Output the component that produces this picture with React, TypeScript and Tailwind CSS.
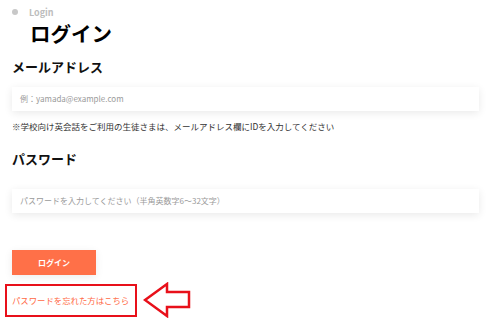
export default function App() {
  return (
    <main
      className="w-[500px] h-[318px] overflow-hidden bg-white"
      style={{ fontFamily: '"Noto Sans CJK JP", "Noto Sans", sans-serif' }}
    >
      <div className="flex items-center pt-[5px] h-[19px]">
        <span className="ml-[12px] h-[6px] w-[6px] rounded-full bg-[#c8c8c8]" />
        <span className="ml-[11px] text-[9px] font-bold leading-none text-[#bdbdbd]">Login</span>
      </div>

      <h1 className="ml-[30px] mt-[1px] text-[20.5px] font-bold leading-[26px] text-black">ログイン</h1>

      <div className="px-[12px]">
        <h2 className="mt-[12px] text-[13px] font-bold leading-[18px] text-[#111]">メールアドレス</h2>

        <div className="mt-[11px] mr-[9px] flex h-[24px] items-center bg-white px-[8px] shadow-[0_2px_8px_rgba(0,0,0,0.09)]">
          <span className="text-[8px] text-[#9a9a9a]">例：yamada@example.com</span>
        </div>

        <p className="mt-[9px] text-[8.5px] leading-[12px] text-[#333]">
          ※学校向け英会話をご利用の生徒さまは、メールアドレス欄にIDを入力してください
        </p>

        <h2 className="mt-[18px] text-[13px] font-bold leading-[18px] text-[#111]">パスワード</h2>

        <div className="mt-[21px] mr-[9px] flex h-[24px] items-center bg-white px-[8px] shadow-[0_2px_8px_rgba(0,0,0,0.09)]">
          <span className="text-[8px] text-[#9a9a9a]">パスワードを入力してください（半角英数字6〜32文字）</span>
        </div>

        <button className="mt-[37px] flex h-[25px] w-[84px] items-center justify-center bg-[#ff7048] text-[8px] font-bold text-white shadow-[0_2px_8px_rgba(0,0,0,0.08)]">
          ログイン
        </button>
      </div>

      <div className="mt-[7px] flex items-center">
        <div className="ml-[5px] flex h-[33px] w-[132px] items-center border-[2.5px] border-[#e8101a] pl-[5px]">
          <span className="text-[8.4px] text-[#ff6a45]">パスワードを忘れた方はこちら</span>
        </div>
        <svg className="ml-[6px]" width="48" height="36" viewBox="0 0 48 36">
          <polygon
            points="2,18 24,2 24,10 46,10 46,25 24,25 24,34"
            fill="white"
            stroke="#e8101a"
            strokeWidth="2.5"
            strokeLinejoin="miter"
          />
        </svg>
      </div>
    </main>
  )
}
